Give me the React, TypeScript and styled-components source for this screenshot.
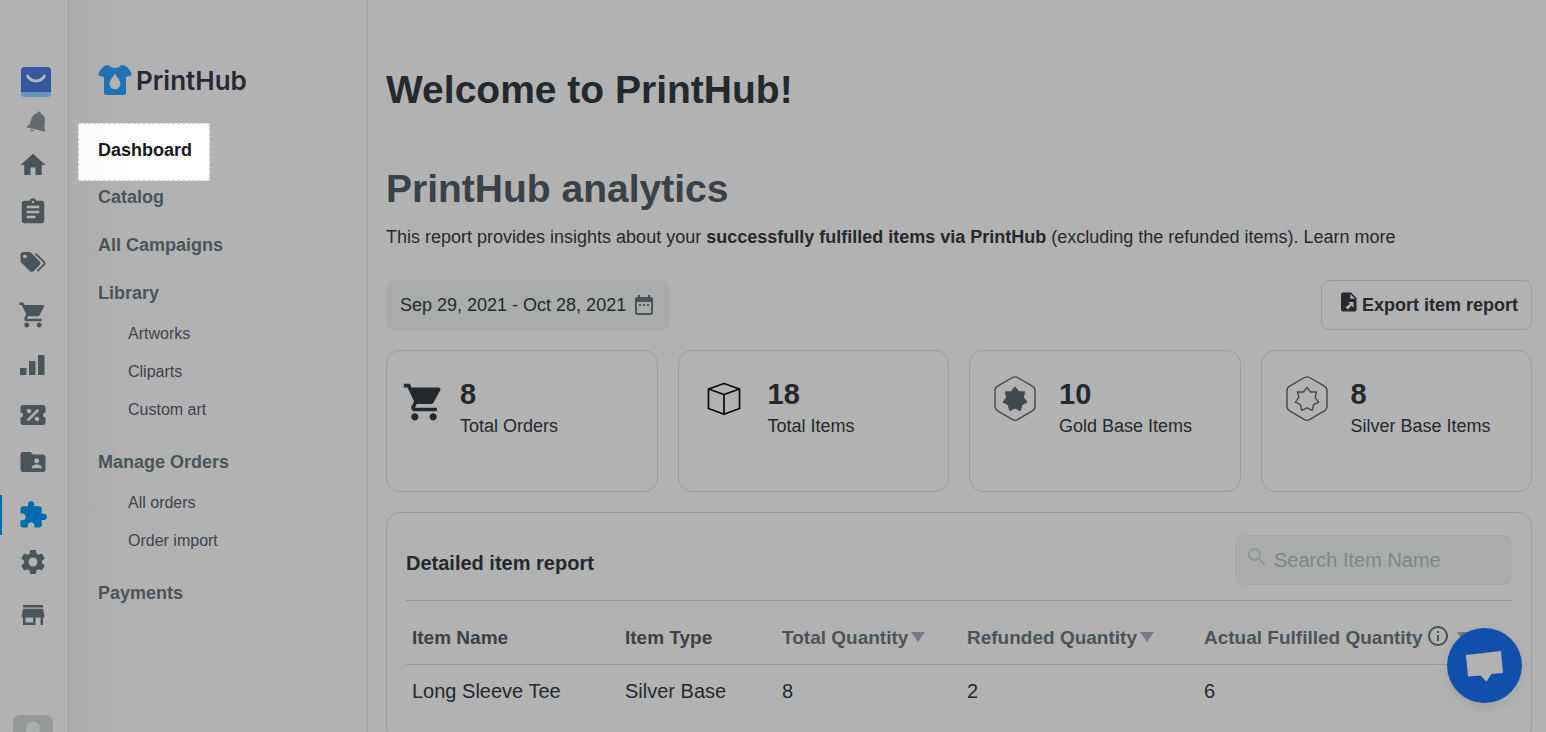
import React from 'react';
import styled, { createGlobalStyle, css } from 'styled-components';
import {
  MdAssignment,
  MdDateRange,
  MdExtension,
  MdFolderShared,
  MdHome,
  MdInfoOutline,
  MdSearch,
  MdSettings,
  MdShoppingCart,
  MdStore,
} from 'react-icons/md';

const color = {
  page: '#b2b2b2',
  line: '#9c9d9e',
  ink: '#24292d',
  heading: '#3a4147',
  muted: '#4b5459',
  field: '#a9acab',
  blue: '#006cad',
};

const GlobalStyle = createGlobalStyle`
  *, *::before, *::after { box-sizing: border-box; }
  body {
    margin: 0;
    background: ${color.page};
    color: ${color.ink};
    font-family: "Liberation Sans", Arial, sans-serif;
    font-size: 18px;
  }
  h1, h2, h3, p, ul { margin: 0; padding: 0; }
  ul { list-style: none; }
  a { color: inherit; text-decoration: none; }
  button, input { font: inherit; color: inherit; }
  button { cursor: pointer; }
  svg { display: block; flex: none; }
`;

const Shell = styled.div`
  display: flex;
  height: 100vh;
  overflow: hidden;
`;

/* ---------- icon rail ---------- */

const Rail = styled.nav`
  flex: none;
  width: 69px;
  padding-top: 67px;
  border-right: 1px solid #a3a3a3;
  color: ${color.muted};
`;

const RailTop = styled.div`
  display: flex;
  flex-direction: column;
  align-items: center;
  gap: 14px;
  padding-left: 3px;
  height: 71px;
`;

const PlainButton = styled.button`
  display: block;
  padding: 0;
  border: 0;
  background: none;
  color: #646b6e;
`;

const RailLink = styled.a<{ $space: number; $active?: boolean }>`
  display: flex;
  align-items: center;
  justify-content: center;
  height: 40px;
  margin-top: ${(p) => p.$space}px;
  padding-right: 4px;
  border-left: 2px solid ${(p) => (p.$active ? color.blue : 'transparent')};
  color: ${(p) => (p.$active ? color.blue : 'inherit')};
`;

const Avatar = styled.a`
  display: block;
  width: 40px;
  margin: 80px 0 0 13px;
`;

/* ---------- side menu ---------- */

const Side = styled.aside`
  flex: none;
  width: 299px;
  padding: 63px 9px 0;
  border-right: 1px solid #a3a3a3;
  background: linear-gradient(to right, #adadad, ${color.page} 64px);
`;

const Brand = styled.a`
  display: flex;
  align-items: center;
  gap: 4px;
  height: 34px;
  margin: 0 0 26px 20px;
  color: #282a33;
  font-family: Inter, sans-serif;
  font-size: 26px;
  font-weight: 600;
`;

const Menu = styled.ul`
  display: flex;
  flex-direction: column;
  align-items: flex-start;
  gap: 16px;
`;

const MenuLink = styled.a<{ $current?: boolean }>`
  display: block;
  padding: 0 20px;
  color: ${color.muted};
  font-weight: 700;
  line-height: 32px;
  ${(p) =>
    p.$current &&
    css`
      height: 58px;
      margin-bottom: -16px;
      padding: 10px 17px 0 19px;
      border: 1px dashed #d0d0d0;
      background: linear-gradient(to right, #fafafa, #fff 54px);
      color: #16191c;
    `}
`;

const SubMenu = styled.ul`
  margin: 6px 0 1px 50px;
  font-size: 16px;
  line-height: 38px;
  color: #3f424d;
`;

/* ---------- main ---------- */

const Main = styled.main`
  flex: 1;
  min-width: 0;
  padding: 66px 14px 0 18px;
`;

const Title = styled.h1`
  font-size: 39px;
  line-height: 48px;
`;

const SectionTitle = styled.h2`
  margin-top: 51px;
  color: ${color.heading};
  font-size: 39px;
  line-height: 48px;
`;

const Intro = styled.p`
  margin-top: 12px;
  line-height: 24px;
`;

const Controls = styled.div`
  display: flex;
  justify-content: space-between;
  margin-top: 31px;
`;

const DateButton = styled.button`
  display: flex;
  align-items: center;
  gap: 6px;
  height: 50px;
  padding: 0 14px;
  border: 0;
  border-radius: 8px;
  background: ${color.field};
  svg { color: ${color.muted}; }
`;

const ExportButton = styled.button`
  display: flex;
  align-items: center;
  gap: 4px;
  height: 50px;
  padding: 0 13px 0 18px;
  border: 1px solid ${color.line};
  border-radius: 8px;
  background: none;
  font-weight: 700;
  svg { margin-bottom: 7px; }
`;

const Cards = styled.div`
  display: grid;
  grid-template-columns: repeat(4, 1fr);
  gap: 20px;
  margin-top: 20px;
`;

const Card = styled.section`
  display: flex;
  align-items: flex-start;
  gap: 14px;
  height: 142px;
  padding: 25px 15px;
  border: 1px solid ${color.line};
  border-radius: 14px;
`;

const CardIcon = styled.div<{ $width: number }>`
  display: flex;
  align-items: flex-end;
  justify-content: center;
  flex: none;
  width: ${(p) => p.$width}px;
  height: 46px;
`;

const CardValue = styled.div`
  font-size: 29px;
  font-weight: 700;
  line-height: 36px;
`;

const CardLabel = styled.div`
  line-height: 28px;
`;

const Panel = styled.section`
  margin-top: 20px;
  padding: 22px 19px;
  border: 1px solid ${color.line};
  border-radius: 14px;
`;

const PanelHead = styled.div`
  display: flex;
  align-items: center;
  justify-content: space-between;
  padding-bottom: 15px;
  border-bottom: 1px solid #929696;
`;

const PanelTitle = styled.h3`
  padding-top: 6px;
  font-size: 20px;
  line-height: 24px;
`;

const Search = styled.label`
  display: flex;
  align-items: center;
  gap: 5px;
  width: 277px;
  height: 50px;
  padding: 0 10px;
  border-radius: 8px;
  background: ${color.field};
  svg { margin-bottom: 6px; color: #939696; }
`;

const SearchInput = styled.input`
  flex: 1;
  min-width: 0;
  padding: 0;
  border: 0;
  outline: 0;
  background: none;
  font-size: 20px;
  &::placeholder { color: #828585; opacity: 1; }
`;

const Table = styled.table`
  width: 100%;
  table-layout: fixed;
  border-collapse: collapse;
  text-align: left;
`;

const Th = styled.th<{ $width?: string; $sortable?: boolean }>`
  width: ${(p) => p.$width || 'auto'};
  height: 63px;
  padding: 12px 0 0 6px;
  border-bottom: 1px solid #9b9ba5;
  color: ${(p) => (p.$sortable ? color.muted : color.heading)};
  font-size: 19px;
  white-space: nowrap;
`;

const SortButton = styled.button`
  display: flex;
  align-items: center;
  gap: 3px;
  height: 22px;
  padding: 0;
  border: 0;
  background: none;
  font-weight: 700;
  svg { margin: 0 4px 4px 0; }
`;

const Arrow = styled.span`
  margin-bottom: 2px;
  border: 7px solid transparent;
  border-top: 10px solid #787b85;
  border-bottom: 0;
`;

const Td = styled.td`
  height: 54px;
  padding: 0 0 0 6px;
  font-size: 20px;
`;

const Chat = styled.button`
  position: fixed;
  right: 24px;
  bottom: 29px;
  width: 75px;
  height: 75px;
  padding: 0;
  border: 0;
  border-radius: 50%;
  background: #1150ad;
  box-shadow: 0 4px 12px rgba(0, 0, 0, 0.08);
`;

/* ---------- drawings ---------- */

const BagLogo = () => (
  <svg width="30" height="30" viewBox="0 0 30 30">
    <rect width="30" height="30" rx="4" fill="#6492b8" />
    <path d="M4 0h22a4 4 0 0 1 4 4v21H0V4a4 4 0 0 1 4-4z" fill="#3557a0" />
    <path d="M6.500 9c4 6.500 13 6.500 17 0" fill="none" stroke="#b4b6ba" strokeWidth="3" strokeLinecap="round" />
  </svg>
);

const Bell = () => (
  <svg width="20" height="22" viewBox="0 0 20 22" fill="currentColor">
    <path d="M13 .5C14.500 .5 15 1.600 14.800 2.800C18 4 19.300 6.800 18.900 10L18.300 15.500L19.300 20.800L.2 16.300L4 12.800L5.500 7.500C6.500 4.500 8.500 2.700 11.400 2.300C11.500 1.200 12 .5 13 .5zM4 18.300L8.500 19.400C7.500 21 4.500 20.500 4 18.300z" />
  </svg>
);

const ShirtLogo = () => (
  <svg width="34" height="32" viewBox="0 0 34 32">
    <path
      d="M11 1C12.500 4.800 21.500 4.800 23 1L27 1.800C30.500 3.500 32.500 7 33.600 10.300C33.900 11 33.500 11.400 33 11.600L28 13V28.500C28 30.200 27.200 31 25.500 31H8.500C6.800 31 6 30.200 6 28.500V13L1 11.600C.5 11.400 .1 11 .4 10.300C1.500 7 3.500 3.500 7 1.800z"
      fill="#2272b3"
    />
    <path d="M17 9.800C19 13 22.400 16.300 22.400 19.900A5.400 5.400 0 0 1 11.600 19.900C11.600 16.300 15 13 17 9.800z" fill={color.page} />
  </svg>
);

const Tags = () => (
  <svg width="30" height="30" viewBox="0 0 24 24" fill="currentColor">
    <path d="M5.500,9A1.500,1.500 0 0,0 7,7.500A1.500,1.500 0 0,0 5.500,6A1.500,1.500 0 0,0 4,7.500A1.500,1.500 0 0,0 5.500,9M17.410,11.580C17.770,11.940 18,12.440 18,13C18,13.550 17.780,14.050 17.410,14.410L12.410,19.410C12.050,19.770 11.550,20 11,20C10.450,20 9.950,19.780 9.580,19.410L2.590,12.420C2.220,12.050 2,11.550 2,11V6C2,4.890 2.890,4 4,4H9C9.550,4 10.050,4.220 10.410,4.580L17.410,11.580M13.540,5.710L14.540,4.710L21.410,11.580C21.780,11.940 22,12.450 22,13C22,13.550 21.780,14.050 21.420,14.410L16.040,19.790L15.040,18.790L20.750,13L13.540,5.710Z" />
  </svg>
);

const Bars = () => (
  <svg width="30" height="30" viewBox="0 0 30 30" fill="currentColor">
    <path d="M2 18h6.500v7H2zM11 11h6.500v14H11zM20 5h6.500v20H20z" />
  </svg>
);

const Coupon = () => (
  <svg width="30" height="30" viewBox="0 0 24 24" fill="currentColor">
    <path d="M4,4A2,2 0 0,0 2,6V10A2,2 0 0,1 4,12A2,2 0 0,1 2,14V18A2,2 0 0,0 4,20H20A2,2 0 0,0 22,18V14A2,2 0 0,1 20,12A2,2 0 0,1 22,10V6C22,4.890 21.100,4 20,4H4M15.500,7L17,8.500L8.500,17L7,15.500L15.500,7M8.810,7.040C9.790,7.040 10.580,7.830 10.580,8.810A1.770,1.770 0 0,1 8.810,10.580C7.830,10.580 7.040,9.790 7.040,8.810A1.770,1.770 0 0,1 8.810,7.040M15.190,13.420C16.170,13.420 16.960,14.210 16.960,15.190A1.770,1.770 0 0,1 15.190,16.960C14.210,16.960 13.420,16.170 13.420,15.190A1.770,1.770 0 0,1 15.190,13.420Z" />
  </svg>
);

const AvatarIcon = () => (
  <svg width="40" height="40" viewBox="0 0 40 40">
    <rect width="40" height="40" rx="8" fill="#949898" />
    <circle cx="20" cy="13.500" r="7" fill="#aaaeae" />
    <path d="M7 34c2-8 8-11 13-11s11 3 13 11z" fill="#aaaeae" />
  </svg>
);

const ExportIcon = () => (
  <svg width="18" height="22" viewBox="0 0 18 22">
    <path d="M3 1.500h8L16.500 7v11.500a2 2 0 0 1-2 2H3a2 2 0 0 1-2-2v-15a2 2 0 0 1 2-2z" fill="currentColor" />
    <path d="M10.300 3v4.800h4.700z" fill={color.page} />
    <path d="M13.500 11H8.300l1.900 1.900L5.500 16l2.300 2.500 3.600-3.900 2.100 2.100z" fill={color.page} />
  </svg>
);

const Cart = () => (
  <svg width="44" height="44" viewBox="0 0 24 24" fill="currentColor">
    <path d="M7 19.200c-1.100 0-1.990.9-1.990 2S5.900 23.200 7 23.200s2-.9 2-2-.9-2-2-2zM1 3.200v2h2l3.600 7.590-1.350 2.450c-.16.280-.25.610-.25.960 0 1.100.9 2 2 2h12v-2H7.420c-.14 0-.25-.11-.25-.25l.03-.12.9-1.630h7.450c.75 0 1.410-.41 1.750-1.030l3.580-6.490A1.003 1.003 0 0 0 20 5.200H5.210l-.94-2H1zm16 16c-1.100 0-1.990.9-1.990 2s.89 2 1.990 2 2-.9 2-2-.9-2-2-2z" />
  </svg>
);

const BoxIcon = () => (
  <svg width="36" height="46" viewBox="0 -5 36 46" fill="none" stroke="#08090a" strokeWidth="1.700" strokeLinejoin="round">
    <path d="M18 2.500L33.500 8v19.500L18 33.300 2.500 27.500V8zM2.500 8l15.500 5.500 15.500-5.500M18 13.500v19.500" />
  </svg>
);

const badgeStar = (() => {
  const points: string[] = [];
  for (let i = 0; i < 14; i += 1) {
    const radius = i % 2 ? 8.4 : 12;
    const angle = (Math.PI * i) / 7 - Math.PI / 2;
    points.push(`${21 + radius * Math.cos(angle)},${23.5 + radius * Math.sin(angle)}`);
  }
  return points.join(' ');
})();

const BadgeIcon = ({ filled }: { filled?: boolean }) => (
  <svg width="42" height="46" viewBox="0 0 42 46" fill="none" stroke="#42494d" strokeWidth="1.400" strokeLinejoin="round">
    <path d="M18.500 1.500Q21 .2 23.500 1.500L37.500 9.700Q41 11.500 41 14.500V30.500Q41 33.500 37.500 35.300L23.500 43.700Q21 45 18.500 43.700L4.500 35.300Q1 33.500 1 30.500V14.500Q1 11.500 4.500 9.700z" />
    <polygon points={badgeStar} fill={filled ? '#42494d' : 'none'} />
  </svg>
);

const ChatIcon = () => (
  <svg width="75" height="75" viewBox="0 0 75 75" fill="#b2b2b2">
    <path d="M19 27L54 23 56 45 44.500 46 39.500 53.500 33.500 47.500 21 48.500z" />
  </svg>
);

/* ---------- page ---------- */

const railLinks = [
  { name: 'Home', icon: <MdHome size={30} />, space: 7 },
  { name: 'Orders', icon: <MdAssignment size={30} />, space: 7 },
  { name: 'Products', icon: <Tags />, space: 10 },
  { name: 'Carts', icon: <MdShoppingCart size={30} />, space: 13 },
  { name: 'Analytics', icon: <Bars />, space: 10 },
  { name: 'Discounts', icon: <Coupon />, space: 10 },
  { name: 'Customers', icon: <MdFolderShared size={30} />, space: 7 },
  { name: 'Apps', icon: <MdExtension size={30} />, space: 13, active: true },
  { name: 'Settings', icon: <MdSettings size={30} />, space: 7 },
  { name: 'Store', icon: <MdStore size={30} />, space: 13 },
];

const menu: { label: string; current?: boolean; children?: string[] }[] = [
  { label: 'Dashboard', current: true },
  { label: 'Catalog' },
  { label: 'All Campaigns' },
  { label: 'Library', children: ['Artworks', 'Cliparts', 'Custom art'] },
  { label: 'Manage Orders', children: ['All orders', 'Order import'] },
  { label: 'Payments' },
];

const stats = [
  { value: 8, label: 'Total Orders', icon: <Cart />, width: 44 },
  { value: 18, label: 'Total Items', icon: <BoxIcon />, width: 60 },
  { value: 10, label: 'Gold Base Items', icon: <BadgeIcon filled />, width: 60 },
  { value: 8, label: 'Silver Base Items', icon: <BadgeIcon />, width: 60 },
];

export default function App() {
  return (
    <>
      <GlobalStyle />
      <Shell>
        <Rail aria-label="Store">
          <RailTop>
            <a href="#store" aria-label="Store home"><BagLogo /></a>
            <PlainButton aria-label="Notifications"><Bell /></PlainButton>
          </RailTop>
          {railLinks.map((l) => (
            <RailLink key={l.name} href="#section" aria-label={l.name} $space={l.space} $active={l.active}>
              {l.icon}
            </RailLink>
          ))}
          <Avatar href="#account" aria-label="Account"><AvatarIcon /></Avatar>
        </Rail>

        <Side>
          <Brand href="#printhub"><ShirtLogo />PrintHub</Brand>
          <Menu>
            {menu.map((m) => (
              <li key={m.label}>
                <MenuLink href="#menu" $current={m.current}>{m.label}</MenuLink>
                {m.children && (
                  <SubMenu>
                    {m.children.map((c) => (
                      <li key={c}><a href="#menu">{c}</a></li>
                    ))}
                  </SubMenu>
                )}
              </li>
            ))}
          </Menu>
        </Side>

        <Main>
          <Title>Welcome to PrintHub!</Title>
          <SectionTitle>PrintHub analytics</SectionTitle>
          <Intro>
            This report provides insights about your <b>successfully fulfilled items via PrintHub</b>{' '}
            (excluding the refunded items). <a href="#learn">Learn more</a>
          </Intro>
          <Controls>
            <DateButton>Sep 29, 2021 - Oct 28, 2021<MdDateRange size={24} /></DateButton>
            <ExportButton><ExportIcon />Export item report</ExportButton>
          </Controls>
          <Cards>
            {stats.map((s) => (
              <Card key={s.label}>
                <CardIcon $width={s.width}>{s.icon}</CardIcon>
                <div>
                  <CardValue>{s.value}</CardValue>
                  <CardLabel>{s.label}</CardLabel>
                </div>
              </Card>
            ))}
          </Cards>
          <Panel>
            <PanelHead>
              <PanelTitle>Detailed item report</PanelTitle>
              <Search>
                <MdSearch size={24} />
                <SearchInput type="search" aria-label="Search Item Name" placeholder="Search Item Name" />
              </Search>
            </PanelHead>
            <Table>
              <thead>
                <tr>
                  <Th $width="213px">Item Name</Th>
                  <Th $width="157px">Item Type</Th>
                  <Th $width="185px" $sortable><SortButton>Total Quantity<Arrow /></SortButton></Th>
                  <Th $width="237px" $sortable><SortButton>Refunded Quantity<Arrow /></SortButton></Th>
                  <Th $sortable>
                    <SortButton>Actual Fulfilled Quantity<MdInfoOutline size={24} /><Arrow /></SortButton>
                  </Th>
                </tr>
              </thead>
              <tbody>
                <tr>
                  <Td>Long Sleeve Tee</Td>
                  <Td>Silver Base</Td>
                  <Td>8</Td>
                  <Td>2</Td>
                  <Td>6</Td>
                </tr>
              </tbody>
            </Table>
          </Panel>
        </Main>
        <Chat aria-label="Open chat"><ChatIcon /></Chat>
      </Shell>
    </>
  );
}
